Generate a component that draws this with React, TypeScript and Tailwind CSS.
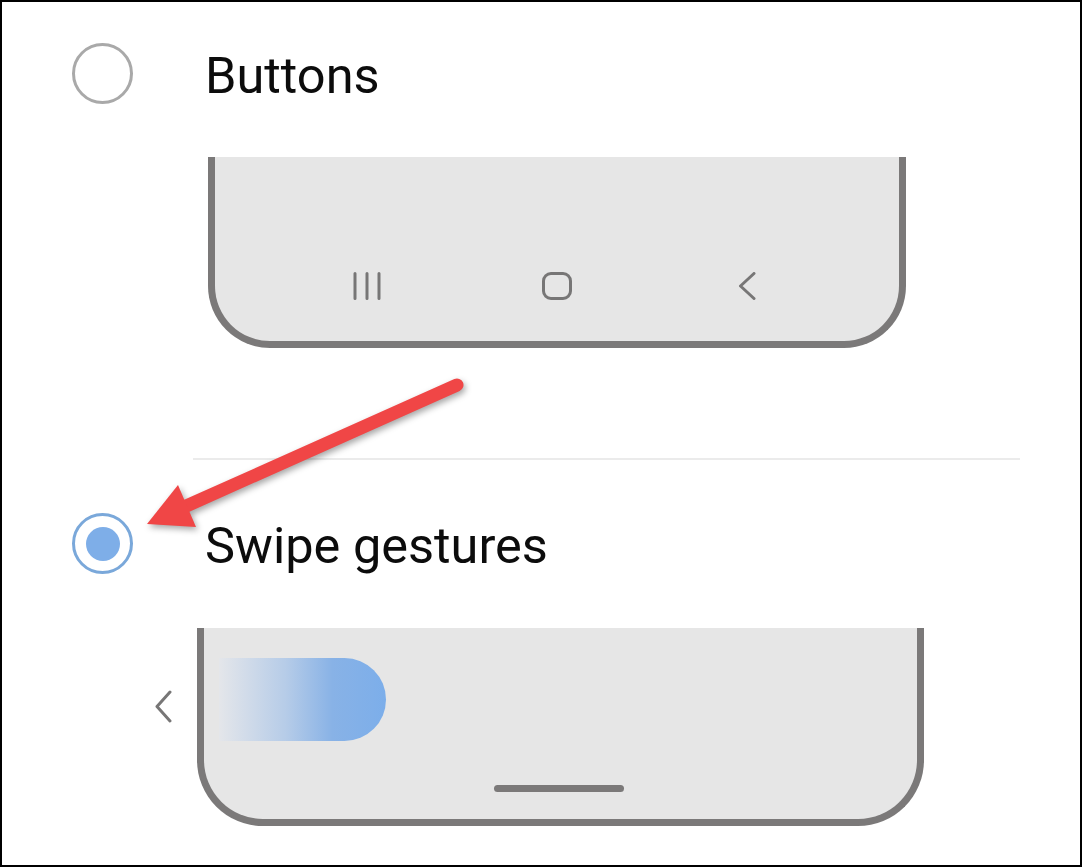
import React from 'react';

const FRAME = 'border-x-[7px] border-b-[7px] border-[#7b7979] bg-[#e6e6e6]';

// Radio circle, filled when selected
function Radio({ checked = false }: { checked?: boolean }) {
  return (
    <div
      className={`w-[61px] h-[61px] rounded-full border-[3px] flex items-center justify-center shrink-0 ${
        checked ? 'border-[#7aa8da]' : 'border-[#a9a9a9]'
      }`}
    >
      {checked && <div className="w-[34px] h-[34px] rounded-full bg-[#7eaee8]" />}
    </div>
  );
}

function OptionRow({ label, checked }: { label: string; checked?: boolean }) {
  return (
    <div className="flex items-center h-[61px] pl-[70px]">
      <Radio checked={checked} />
      <span className="ml-[72px] mt-[4px] text-[50.5px] leading-[61px] text-[#0c0c0c]">{label}</span>
    </div>
  );
}

// Three-button navigation bar icons
function NavIcons() {
  return (
    <div className="flex justify-center gap-[150px]">
      <svg width="40" height="28" viewBox="0 0 40 28" fill="none" stroke="#777676" strokeWidth="3" strokeLinecap="round">
        <path d="M8 1.5v25M20 1.5v25M32 1.5v25" />
      </svg>
      <svg width="40" height="28" viewBox="0 0 40 28" fill="none" stroke="#777676" strokeWidth="3">
        <rect x="6.5" y="1.5" width="27" height="25" rx="7.5" />
      </svg>
      <svg width="40" height="28" viewBox="0 0 40 28" fill="none" stroke="#777676" strokeWidth="3" strokeLinecap="round" strokeLinejoin="round">
        <path d="M27 1.5L13.5 14L27 26.5" />
      </svg>
    </div>
  );
}

export default function App() {
  return (
    <div className="relative w-[1082px] h-[867px] border-2 border-black bg-white overflow-hidden font-['Roboto','Liberation_Sans',sans-serif]">
      <div className="flex flex-col">
        <div className="mt-[41px]">
          <OptionRow label="Buttons" />
        </div>

        {/* buttons preview */}
        <div className={`mt-[53px] ml-[206px] w-[698px] h-[191px] rounded-b-[62px] ${FRAME} flex flex-col justify-end pb-[41px]`}>
          <NavIcons />
        </div>

        <div className="mt-[110px] ml-[191px] w-[827px] h-[2px] bg-[#ebebeb]" />

        <div className="mt-[53px]">
          <OptionRow label="Swipe gestures" checked />
        </div>

        {/* gestures preview */}
        <div className="mt-[54px] flex items-start">
          <svg className="ml-[151px] mt-[62px] shrink-0" width="20" height="33" viewBox="0 0 20 33" fill="none" stroke="#777676" strokeWidth="3" strokeLinecap="round" strokeLinejoin="round">
            <path d="M17 2L4 16.5L17 31" />
          </svg>
          <div className={`ml-[24px] w-[727px] h-[198px] rounded-b-[66px] ${FRAME} flex flex-col pt-[30px] pl-[15px]`}>
            <div className="w-[167px] h-[83px] rounded-r-[42px] bg-[linear-gradient(90deg,#e4e6ea_0%,#b6cce8_40%,#88b2e6_68%,#7caeea_100%)]" />
            <div className="mt-auto mb-[27px] self-center -translate-x-[9px] w-[130px] h-[7px] rounded-full bg-[#7b7979]" />
          </div>
        </div>
      </div>

      {/* red callout arrow */}
      <svg
        className="absolute left-0 top-0 pointer-events-none drop-shadow-[2px_3px_3px_rgba(0,0,0,0.35)]"
        width="1082"
        height="867"
        viewBox="0 0 1082 867"
      >
        <line x1="455" y1="383" x2="182" y2="505" stroke="#f04646" strokeWidth="13" strokeLinecap="round" />
        <polygon points="145,522 176,483 194,525" fill="#f04646" />
      </svg>
    </div>
  );
}
